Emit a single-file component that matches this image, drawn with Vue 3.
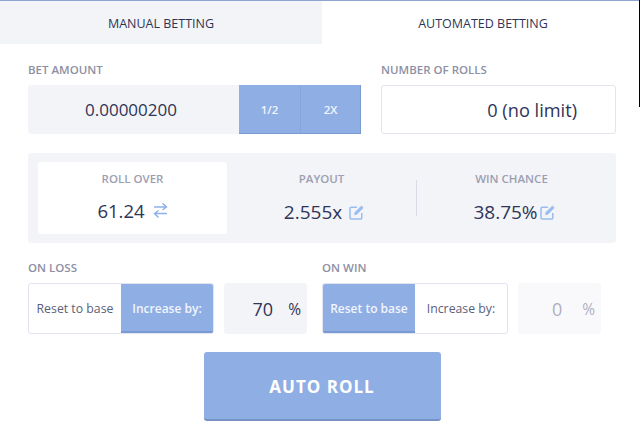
<script setup>
const lossOptions = [
  { label: "Reset to base", active: false },
  { label: "Increase by:", active: true },
];
const winOptions = [
  { label: "Reset to base", active: true },
  { label: "Increase by:", active: false },
];
</script>

<template>
  <div class="page">
    <div class="tabs">
      <div class="tab tab-manual">MANUAL BETTING</div>
      <div class="tab tab-auto">AUTOMATED BETTING</div>
    </div>

    <div class="content">
      <div class="top-row">
        <div class="bet-col">
          <div class="label">BET AMOUNT</div>
          <div class="bet-group">
            <div class="bet-value">0.00000200</div>
            <button class="mult half">1/2</button>
            <button class="mult double">2X</button>
          </div>
        </div>
        <div class="rolls-col">
          <div class="label">NUMBER OF ROLLS</div>
          <div class="rolls-input">0 (no limit)</div>
        </div>
      </div>

      <div class="stats">
        <div class="stat stat-roll">
          <div class="stat-title">ROLL OVER</div>
          <div class="stat-value">
            61.24
            <svg class="icon swap" width="15" height="17" viewBox="0 0 15 17" fill="none" stroke="#8fb0ea" stroke-width="1.4">
              <path d="M1 5h12.5M9.5 1.2 13.5 5 9.5 8" />
              <path d="M14 11.5H1.5M5.5 8.5 1.5 11.5 5.5 15.5" />
            </svg>
          </div>
        </div>
        <div class="stat stat-payout">
          <div class="stat-title">PAYOUT</div>
          <div class="stat-value">
            2.555x
            <svg class="icon" width="15" height="15" viewBox="0 0 15 15" fill="none" stroke="#9bbcf0" stroke-width="1.5">
              <path d="M8 2.2H2.2a1.2 1.2 0 0 0-1.2 1.2v9.4A1.2 1.2 0 0 0 2.2 14h9.4a1.2 1.2 0 0 0 1.2-1.2V8" />
              <path d="M5.5 9.8 6 7.2 12.4 1 14.3 2.8 8 9.2Z" fill="#9bbcf0" stroke-width="0.6" />
            </svg>
          </div>
        </div>
        <div class="stat-divider"></div>
        <div class="stat stat-chance">
          <div class="stat-title">WIN CHANCE</div>
          <div class="stat-value tight">
            38.75%<svg class="icon" width="15" height="15" viewBox="0 0 15 15" fill="none" stroke="#9bbcf0" stroke-width="1.5">
              <path d="M8 2.2H2.2a1.2 1.2 0 0 0-1.2 1.2v9.4A1.2 1.2 0 0 0 2.2 14h9.4a1.2 1.2 0 0 0 1.2-1.2V8" />
              <path d="M5.5 9.8 6 7.2 12.4 1 14.3 2.8 8 9.2Z" fill="#9bbcf0" stroke-width="0.6" />
            </svg>
          </div>
        </div>
      </div>

      <div class="rules">
        <div class="rule">
          <div class="label">ON LOSS</div>
          <div class="rule-row">
            <div class="toggle">
              <div
                v-for="opt in lossOptions"
                :key="opt.label"
                class="toggle-item"
                :class="{ active: opt.active }"
              >
                {{ opt.label }}
              </div>
            </div>
            <div class="pct">
              <span class="pct-num">70</span>
              <span class="pct-sign">%</span>
            </div>
          </div>
        </div>
        <div class="rule">
          <div class="label">ON WIN</div>
          <div class="rule-row">
            <div class="toggle">
              <div
                v-for="opt in winOptions"
                :key="opt.label"
                class="toggle-item"
                :class="{ active: opt.active }"
              >
                {{ opt.label }}
              </div>
            </div>
            <div class="pct disabled">
              <span class="pct-num">0</span>
              <span class="pct-sign">%</span>
            </div>
          </div>
        </div>
      </div>

      <div class="action">
        <button class="auto-roll">AUTO ROLL</button>
      </div>
    </div>

    <div class="edge-line"></div>
  </div>
</template>

<style>
html,
body {
  margin: 0;
  background: #fff;
  overflow: hidden;
}
</style>

<style scoped>
.page {
  position: relative;
  width: 640px;
  height: 437px;
  box-sizing: border-box;
  border-top: 1px solid #8fa5d0;
  font-family: "Open Sans", sans-serif;
  color: #2f3557;
  background: #fff;
}

.edge-line {
  position: absolute;
  top: -1px;
  right: 0;
  width: 1px;
  height: 107px;
  background: #000;
}

.tabs {
  display: flex;
  height: 43px;
}

.tab {
  display: flex;
  align-items: center;
  justify-content: center;
  font-size: 12.5px;
  padding-top: 1px;
  box-sizing: border-box;
}

.tab-manual {
  width: 322px;
  background: #f3f4f8;
}

.tab-auto {
  width: 318px;
  padding-left: 4px;
}

.content {
  padding: 0 24px 0 28px;
}

.label {
  font-size: 11.5px;
  font-weight: 600;
  color: #8d90a2;
  line-height: 16px;
  height: 16px;
}

.top-row {
  display: flex;
  gap: 20px;
  padding-top: 18px;
}

.bet-col {
  width: 333px;
}

.rolls-col {
  width: 235px;
}

.bet-group {
  display: flex;
  height: 49px;
  margin-top: 7px;
}

.bet-value {
  width: 211px;
  display: flex;
  align-items: center;
  justify-content: center;
  background: #f3f4f8;
  border-radius: 3px 0 0 3px;
  font-size: 17px;
  padding-right: 5px;
  box-sizing: border-box;
}

.mult {
  border: none;
  border-bottom: 1px solid #7a9bd2;
  background: #8faee4;
  color: #f1f5fd;
  font-family: inherit;
  font-size: 11.5px;
  font-weight: 600;
  padding: 0;
}

.half {
  width: 62px;
  border-right: 1px solid #85a4da;
}

.double {
  width: 60px;
  border-right: 1px solid #7a9bd2;
}

.rolls-input {
  height: 49px;
  margin-top: 7px;
  box-sizing: border-box;
  border: 1px solid #e4e4f0;
  border-radius: 3px;
  display: flex;
  align-items: center;
  justify-content: flex-end;
  padding-right: 38px;
  font-size: 18.2px;
}

.stats {
  display: flex;
  align-items: center;
  position: relative;
  height: 90px;
  margin-top: 19px;
  box-sizing: border-box;
  padding: 0 10px;
  background: #f3f4f8;
  border-radius: 3px;
}

.stat {
  display: flex;
  flex-direction: column;
  align-items: center;
}

.stat-roll {
  width: 189px;
  height: 72px;
  background: #fff;
  border-radius: 3px;
  margin-top: -1px;
  box-sizing: border-box;
  padding-top: 9px;
}

.stat-payout {
  width: 189px;
  margin-top: -1px;
}

.stat-divider {
  width: 1px;
  height: 36px;
  background: #d9dae3;
}

.stat-chance {
  width: 189px;
  margin-top: -1px;
}

.stat-title {
  font-size: 11.5px;
  font-weight: 600;
  color: #9c9eb2;
  line-height: 16px;
}

.stat-value {
  display: flex;
  align-items: center;
  gap: 7px;
  font-size: 19px;
  line-height: 24px;
  margin-top: 13px;
}

.stat-payout .stat-value,
.stat-chance .stat-value {
  margin-left: 5px;
}

.stat-roll .stat-value {
  margin-top: 12px;
  gap: 8px;
  font-size: 18.5px;
}

.stat-value.tight {
  gap: 2px;
}

.rules {
  display: flex;
  margin-top: 17px;
}

.rule {
  width: 294px;
}

.rule-row {
  display: flex;
  gap: 10px;
  margin-top: 7px;
}

.toggle {
  display: flex;
  width: 186px;
  height: 51px;
  box-sizing: border-box;
  border: 1px solid #e4e4f0;
  border-radius: 3px;
  overflow: hidden;
}

.toggle-item {
  flex: 1;
  display: flex;
  align-items: center;
  justify-content: center;
  font-size: 12.3px;
  color: #5c607a;
}

.toggle-item.active {
  background: #8faee4;
  color: #f1f5fd;
  font-weight: 600;
  font-size: 12px;
  border-bottom: 2px solid #7a9bd2;
  padding-top: 1px;
}

.pct {
  display: flex;
  align-items: center;
  justify-content: flex-end;
  width: 83px;
  height: 51px;
  box-sizing: border-box;
  padding-right: 6px;
  background: #f3f4f8;
  border-radius: 3px;
}

.pct-num {
  font-size: 18px;
  margin-right: 15px;
}

.pct-sign {
  font-size: 15.5px;
}

.pct.disabled {
  background: #f9f9fc;
  color: #aeb0bf;
}

.pct.disabled .pct-num {
  margin-right: 20px;
}

.action {
  display: flex;
  justify-content: center;
  margin-top: 18px;
}

.auto-roll {
  width: 237px;
  height: 69px;
  border: none;
  border-bottom: 2px solid #7592c4;
  border-radius: 3px;
  background: #8faee4;
  color: #fff;
  font-family: inherit;
  font-size: 17px;
  font-weight: 700;
  letter-spacing: 1px;
  padding: 1px 0 0;
}
</style>
